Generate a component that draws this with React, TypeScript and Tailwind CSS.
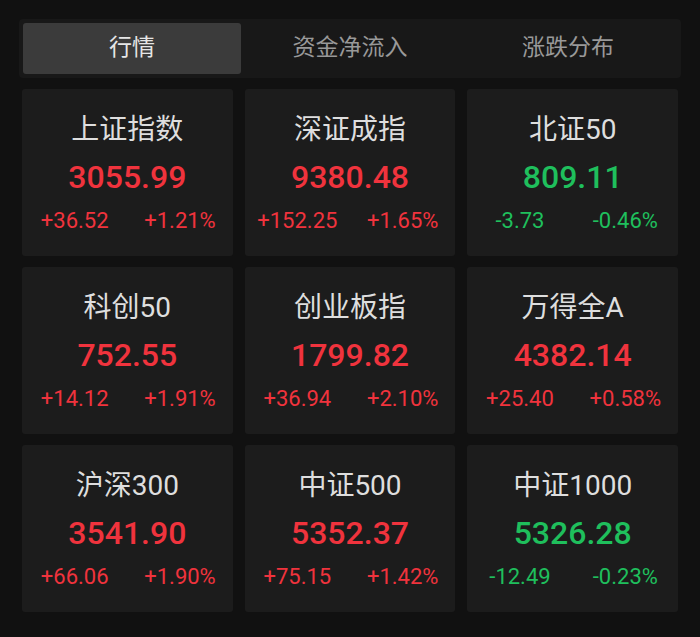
import React from "react";

type Quote = {
  name: string;
  price: string;
  change: string;
  pct: string;
  up: boolean;
};

const QUOTES: Quote[] = [
  { name: "上证指数", price: "3055.99", change: "+36.52", pct: "+1.21%", up: true },
  { name: "深证成指", price: "9380.48", change: "+152.25", pct: "+1.65%", up: true },
  { name: "北证50", price: "809.11", change: "-3.73", pct: "-0.46%", up: false },
  { name: "科创50", price: "752.55", change: "+14.12", pct: "+1.91%", up: true },
  { name: "创业板指", price: "1799.82", change: "+36.94", pct: "+2.10%", up: true },
  { name: "万得全A", price: "4382.14", change: "+25.40", pct: "+0.58%", up: true },
  { name: "沪深300", price: "3541.90", change: "+66.06", pct: "+1.90%", up: true },
  { name: "中证500", price: "5352.37", change: "+75.15", pct: "+1.42%", up: true },
  { name: "中证1000", price: "5326.28", change: "-12.49", pct: "-0.23%", up: false },
];

const TABS = ["行情", "资金净流入", "涨跌分布"];

function QuoteCard({ q }: { q: Quote }) {
  const color = q.up ? "text-[#f0333d]" : "text-[#1fbf5c]";
  return (
    <div className="flex h-[167px] flex-col items-center justify-center rounded-[3px] bg-[#1c1c1c] pt-[2px]">
      <div className="text-[28px] leading-[36px] text-[#dedede]">{q.name}</div>
      <div className={`mt-[10px] text-[32px] leading-[38px] font-medium ${color}`}>{q.price}</div>
      <div className={`mt-[11px] grid w-full grid-cols-2 text-[22px] leading-[28px] ${color}`}>
        <div className="text-center">{q.change}</div>
        <div className="text-center">{q.pct}</div>
      </div>
    </div>
  );
}

export default function App() {
  return (
    <div
      className="h-[637px] w-[700px] bg-[#111111] px-[22px] pt-[19px]"
      style={{ fontFamily: 'Roboto, "Noto Sans CJK SC", sans-serif' }}
    >
      <div className="-mx-[3px] flex h-[59px] rounded-[4px] bg-[#181818] p-[4px]">
        {TABS.map((t, i) => (
          <div
            key={t}
            className={`flex flex-1 items-center justify-center rounded-[3px] text-[23px] ${
              i === 0 ? "bg-[#3b3b3b] text-[#e6e6e6]" : "text-[#999999]"
            }`}
          >
            {t}
          </div>
        ))}
      </div>
      <div className="mt-[11px] grid grid-cols-3 gap-x-[12px] gap-y-[11px]">
        {QUOTES.map((q) => (
          <QuoteCard key={q.name} q={q} />
        ))}
      </div>
    </div>
  );
}
